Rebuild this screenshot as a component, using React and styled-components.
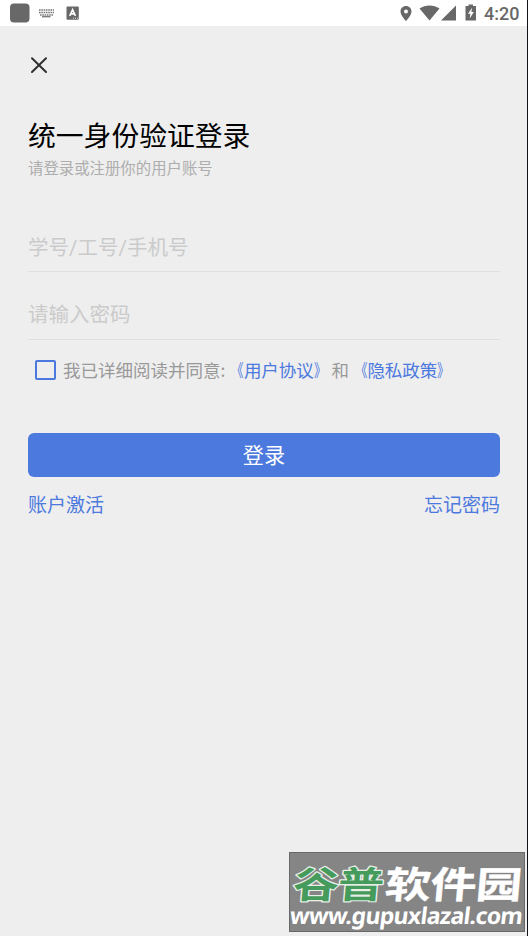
import React from 'react'
import styled, { createGlobalStyle } from 'styled-components'

function App() {
  return (
    <>
      <GlobalStyle />
      <Screen lang="zh-CN">
        <StatusBar>
          <StatusLeft />
          <StatusRight />
        </StatusBar>
        <Content>
          <CloseButton type="button" aria-label="关闭">
            <svg width="16" height="16" viewBox="0 0 16 16">
              <path d="M1 1.2L15 15M15 1.2L1 15" stroke="#303030" strokeWidth="2" fill="none" strokeLinecap="round" />
            </svg>
          </CloseButton>
          <Title>统一身份验证登录</Title>
          <Subtitle>请登录或注册你的用户账号</Subtitle>
          <Field $top={40}>
            <Input type="text" placeholder="学号/工号/手机号" $drop={2} />
          </Field>
          <Field $top={18}>
            <Input type="password" placeholder="请输入密码" $drop={0} />
          </Field>
          <Agreement>
            <Checkbox />
            <span>我已详细阅读并同意:</span>
            <Policy><Bracket $side="right">《</Bracket>用户协议<Bracket $side="left">》</Bracket></Policy>
            <span>和</span>
            <Policy><Bracket $side="right">《</Bracket>隐私政策<Bracket $side="left">》</Bracket></Policy>
          </Agreement>
          <LoginButton type="button">登录</LoginButton>
          <Links>
            <TextLink>账户激活</TextLink>
            <TextLink>忘记密码</TextLink>
          </Links>
        </Content>
        <Watermark>
          <svg width="234" height="47" viewBox="0 0 234 47">
            <g transform="translate(2 44.5) skewX(-5) scale(1 .8)" fontFamily="'Noto Sans CJK SC', sans-serif" fontWeight="700" fontSize="46">
              <text x="0" y="0" textLength="91" fill="#459b5b" stroke="#e8efe9" strokeWidth="3" paintOrder="stroke" strokeLinejoin="round">谷普</text>
              <text x="92" y="0" textLength="137" fill="#fff" stroke="#fff" strokeWidth=".5">软件园</text>
            </g>
          </svg>
          <SiteName>www.gupuxlazal.com</SiteName>
        </Watermark>
      </Screen>
    </>
  )
}

function StatusLeft() {
  return (
    <svg width="80" height="26" viewBox="0 0 80 26" fill="#686868">
      <rect x="10" y="3.5" width="19.5" height="19" rx="4" />
      <path d="M39 10H54M39 12.6H54M40 15H53" stroke="#777" strokeWidth="1.5" strokeDasharray="1.6 .7" />
      <path d="M42 16.7H50.5" stroke="#777" strokeWidth="1.3" />
      <rect x="66.5" y="6.5" width="12.3" height="13.3" rx="1" />
      <path d="M69.8 15.8L72.6 9.7L75.4 15.8M70.8 13.8H74.4" stroke="#fff" strokeWidth="1.7" fill="none" />
      <path d="M73 18.2H78" stroke="#ddd" strokeWidth="1" strokeDasharray="1 1" />
    </svg>
  )
}

function StatusRight() {
  return (
    <Indicators>
      <svg width="84" height="26" viewBox="0 0 84 26" fill="#686868">
        <path fillRule="evenodd" d="M6 6C2.9 6 .5 8.4 .5 11.4C.5 15.4 6 21 6 21S11.5 15.4 11.5 11.4C11.5 8.4 9.1 6 6 6ZM6 9.4A2 2 0 1 1 6 13.4A2 2 0 0 1 6 9.4Z" />
        <path d="M19.5 8.5C25.5 4.6 33.5 4.6 39.5 8.5L29.5 20.5Z" />
        <path d="M56 5.5V20.5H41Z" />
        <path fillRule="evenodd" d="M68.5 4.5H73V6H76V20.5H65.5V6H68.5ZM72 7.7L68 13.8H70.4L69.7 18.5L73.8 12H71.4Z" />
      </svg>
      <Clock>4:20</Clock>
    </Indicators>
  )
}

const GlobalStyle = createGlobalStyle`
* {
  box-sizing: border-box;
}
body {
  margin: 0;
  background-color: #eee;
  font-family: Roboto, "Noto Sans CJK SC", sans-serif;
}
`;

const Screen = styled.main`
position: relative;
width: 528px;
height: 936px;
overflow: hidden;
background-color: #eeeeee;
border-right: 1px solid #101317;
`;

const StatusBar = styled.header`
display: flex;
justify-content: space-between;
height: 26px;
background-color: white;
svg {
  display: block;
}
`;

const Indicators = styled.div`
display: flex;
width: 127px;
`;

const Clock = styled.span`
color: #686868;
font-size: 18px;
font-weight: 500;
line-height: 27px;
`;

const Content = styled.div`
padding: 31px 27px 0 28px;
`;

const CloseButton = styled.button`
display: block;
height: 16px;
margin-left: 3px;
padding: 0;
border: 0;
background: none;
svg {
  display: block;
}
`;

const Title = styled.h1`
margin: 44px 0 0;
color: #000;
font-size: 27.8px;
font-weight: 400;
line-height: 40px;
`;

const Subtitle = styled.p`
margin: 0;
color: #adadad;
font-size: 15.4px;
line-height: 25px;
`;

const Field = styled.div`
height: 50px;
margin-top: ${(props) => props.$top}px;
border-bottom: 1px solid #dfdfdf;
`;

const Input = styled.input`
display: block;
width: 100%;
height: 49px;
padding: ${(props) => props.$drop}px 0 0;
border: 0;
outline: 0;
background: transparent;
font-family: inherit;
font-size: 20.5px;
&::placeholder {
  color: #cbcbcb;
}
`;

const Agreement = styled.div`
display: flex;
align-items: center;
height: 26px;
margin-top: 17px;
padding-left: 7px;
color: #999;
font-family: "Noto Sans CJK SC", sans-serif;
font-size: 17.5px;
line-height: 26px;
white-space: nowrap;
`;

const Checkbox = styled.span`
width: 21px;
height: 20px;
margin-right: 7px;
border: 2px solid #4c79de;
border-radius: 2px;
`;

const Policy = styled.span`
margin-left: 1px;
color: #4c79de;
`;

// narrower chevrons, kept tight against the policy name
const Bracket = styled.span`
display: inline-block;
transform: scaleX(0.7);
transform-origin: ${(props) => props.$side} center;
`;

const LoginButton = styled.button`
display: block;
width: 472px;
height: 44px;
margin-top: 50px;
padding: 1px 0 0;
border: 0;
border-radius: 6px;
background-color: #4c79de;
color: white;
font-family: inherit;
font-size: 21.2px;
line-height: 43px;
`;

const Links = styled.div`
display: flex;
justify-content: space-between;
margin-top: 15px;
`;

const TextLink = styled.span`
color: #4c79de;
font-size: 19px;
line-height: 28px;
`;

const Watermark = styled.div`
position: absolute;
left: 289px;
top: 852px;
width: 236px;
height: 80px;
border: 1px solid #686868;
background-color: #858585;
svg {
  display: block;
  overflow: visible;
}
`;

const SiteName = styled.div`
width: max-content;
color: white;
font-family: "Noto Sans", "Open Sans", sans-serif;
font-size: 23px;
font-weight: 700;
letter-spacing: -0.68px;
line-height: 31px;
transform: skewX(-7deg);
`;

export default App
